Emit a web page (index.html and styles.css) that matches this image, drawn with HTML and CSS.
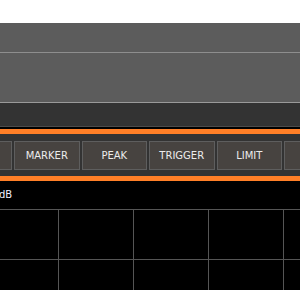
FILE: index.html
```html
<!DOCTYPE html>
<html lang="en">
<head>
  <meta charset="UTF-8">
  <meta name="viewport" content="width=device-width, initial-scale=1.0">
  <title>Spectrum Analyzer</title>
  <link rel="stylesheet" href="styles.css">
</head>
<body>
  <div class="app">
    <div class="title-strip"></div>
    <div class="header"></div>
    <div class="subheader"></div>
    <div class="toolbar"></div>
    <div class="accent"></div>

    <div class="menu-bar">
      <div class="menu-row">
        <button class="menu-btn">AMPT</button>
        <button class="menu-btn">MARKER</button>
        <button class="menu-btn">PEAK</button>
        <button class="menu-btn">TRIGGER</button>
        <button class="menu-btn">LIMIT</button>
        <button class="menu-btn">SAVE</button>
      </div>
    </div>
    <div class="accent"></div>

    <div class="display">
      <div class="scale-label">dB</div>
      <div class="grid"></div>
    </div>
  </div>
</body>
</html>
```

FILE: styles.css
```css
html, body {
  margin: 0;
  padding: 0;
  background: #000;
  overflow: hidden;
}
.app {
  width: 300px;
  height: 290px;
  display: flex;
  flex-direction: column;
  font-family: "DejaVu Sans", sans-serif;
  overflow: hidden;
}
.title-strip {
  height: 23px;
  background: #fff;
}
.header {
  height: 29px;
  background: #5c5c5c;
  border-bottom: 1px solid #8e8e8e;
}
.subheader {
  height: 49px;
  background: #5c5c5c;
  border-bottom: 1px solid #9a9a9a;
}
.toolbar {
  height: 23px;
  background: #333333;
  border-bottom: 1px solid #4c4c4c;
  margin-bottom: 2px;
}
.accent {
  height: 5px;
  background: #ff7f27;
  flex-shrink: 0;
}
.menu-bar {
  background: #333333;
  padding: 7px 0 6px;
  overflow: hidden;
}
.menu-row {
  display: flex;
  gap: 2px;
  margin-left: -53.5px;
}
.menu-btn {
  width: 65.5px;
  height: 29px;
  flex-shrink: 0;
  background: #474340;
  border: 1px solid #5e5e5e;
  color: #ececec;
  font-family: "DejaVu Sans", sans-serif;
  font-size: 10px;
  padding: 0;
}
.display {
  flex: 1;
  background: #000;
  display: flex;
  flex-direction: column;
}
.scale-label {
  height: 28px;
  color: #f0f0ff;
  font-size: 10px;
  line-height: 28px;
  margin-left: -1px;
}
.grid {
  flex: 1;
  background-color: #000;
  background-image:
    linear-gradient(to bottom, #555 1px, transparent 1px),
    linear-gradient(to right, #555 1px, transparent 1px);
  background-size: 75px 50px;
  background-position: -17px 0;
}
```
